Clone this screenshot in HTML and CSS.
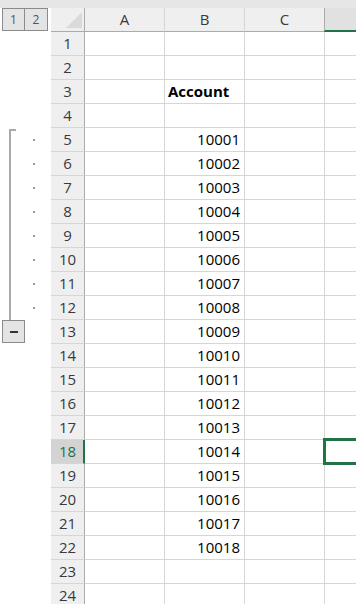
FILE: index.html
```html
<!DOCTYPE html>
<html lang="en">
<head>
  <meta charset="UTF-8">
  <title>Outline Sheet</title>
  <link rel="stylesheet" href="styles.css">
</head>
<body>

  <div class="topband"></div>

  <div class="sheet">
    <div class="row head">
      <div class="gutter">
        <div class="levels"><span class="lvl">1</span><span class="lvl">2</span></div>
      </div>
      <div class="rh corner"><div class="tri"></div></div>
      <div class="ch">A</div>
      <div class="ch">B</div>
      <div class="ch">C</div>
      <div class="ch active"></div>
    </div>

    <div class="row"><div class="gutter"></div><div class="rh">1</div><div class="c"></div><div class="c"></div><div class="c"></div><div class="c"></div></div>
    <div class="row"><div class="gutter"></div><div class="rh">2</div><div class="c"></div><div class="c"></div><div class="c"></div><div class="c"></div></div>
    <div class="row"><div class="gutter"></div><div class="rh">3</div><div class="c"></div><div class="c bold">Account</div><div class="c"></div><div class="c"></div></div>
    <div class="row"><div class="gutter"></div><div class="rh">4</div><div class="c"></div><div class="c"></div><div class="c"></div><div class="c"></div></div>

    <div class="row"><div class="gutter"><span class="bracket first"></span><span class="dot"></span></div><div class="rh">5</div><div class="c"></div><div class="c num">10001</div><div class="c"></div><div class="c"></div></div>
    <div class="row"><div class="gutter"><span class="bracket"></span><span class="dot"></span></div><div class="rh">6</div><div class="c"></div><div class="c num">10002</div><div class="c"></div><div class="c"></div></div>
    <div class="row"><div class="gutter"><span class="bracket"></span><span class="dot"></span></div><div class="rh">7</div><div class="c"></div><div class="c num">10003</div><div class="c"></div><div class="c"></div></div>
    <div class="row"><div class="gutter"><span class="bracket"></span><span class="dot"></span></div><div class="rh">8</div><div class="c"></div><div class="c num">10004</div><div class="c"></div><div class="c"></div></div>
    <div class="row"><div class="gutter"><span class="bracket"></span><span class="dot"></span></div><div class="rh">9</div><div class="c"></div><div class="c num">10005</div><div class="c"></div><div class="c"></div></div>
    <div class="row"><div class="gutter"><span class="bracket"></span><span class="dot"></span></div><div class="rh">10</div><div class="c"></div><div class="c num">10006</div><div class="c"></div><div class="c"></div></div>
    <div class="row"><div class="gutter"><span class="bracket"></span><span class="dot"></span></div><div class="rh">11</div><div class="c"></div><div class="c num">10007</div><div class="c"></div><div class="c"></div></div>
    <div class="row"><div class="gutter"><span class="bracket"></span><span class="dot"></span></div><div class="rh">12</div><div class="c"></div><div class="c num">10008</div><div class="c"></div><div class="c"></div></div>
    <div class="row"><div class="gutter"><span class="collapse"><span class="minus"></span></span></div><div class="rh">13</div><div class="c"></div><div class="c num">10009</div><div class="c"></div><div class="c"></div></div>

    <div class="row"><div class="gutter"></div><div class="rh">14</div><div class="c"></div><div class="c num">10010</div><div class="c"></div><div class="c"></div></div>
    <div class="row"><div class="gutter"></div><div class="rh">15</div><div class="c"></div><div class="c num">10011</div><div class="c"></div><div class="c"></div></div>
    <div class="row"><div class="gutter"></div><div class="rh">16</div><div class="c"></div><div class="c num">10012</div><div class="c"></div><div class="c"></div></div>
    <div class="row"><div class="gutter"></div><div class="rh">17</div><div class="c"></div><div class="c num">10013</div><div class="c"></div><div class="c"></div></div>
    <div class="row"><div class="gutter"></div><div class="rh active">18</div><div class="c"></div><div class="c num">10014</div><div class="c"></div><div class="c selected"></div></div>
    <div class="row"><div class="gutter"></div><div class="rh">19</div><div class="c"></div><div class="c num">10015</div><div class="c"></div><div class="c"></div></div>
    <div class="row"><div class="gutter"></div><div class="rh">20</div><div class="c"></div><div class="c num">10016</div><div class="c"></div><div class="c"></div></div>
    <div class="row"><div class="gutter"></div><div class="rh">21</div><div class="c"></div><div class="c num">10017</div><div class="c"></div><div class="c"></div></div>
    <div class="row"><div class="gutter"></div><div class="rh">22</div><div class="c"></div><div class="c num">10018</div><div class="c"></div><div class="c"></div></div>
    <div class="row"><div class="gutter"></div><div class="rh">23</div><div class="c"></div><div class="c"></div><div class="c"></div><div class="c"></div></div>
    <div class="row"><div class="gutter"></div><div class="rh">24</div><div class="c"></div><div class="c"></div><div class="c"></div><div class="c"></div></div>
  </div>

</body>
</html>
```

FILE: styles.css
```css
body {
  margin: 0;
  width: 356px;
  height: 604px;
  overflow: hidden;
  background-color: #fff;
  font-family: "Open Sans", "Liberation Sans", sans-serif;
}
.topband {
  height: 8px;
  background-color: #e6e6e6;
}
.sheet {
  width: 356px;
  overflow: hidden;
}
.row {
  display: grid;
  grid-template-columns: 51px 34px 80px 80px 80px 80px;
  height: 24px;
}
.row > div {
  box-sizing: border-box;
}
.gutter {
  display: flex;
  align-items: center;
}
.rh {
  background-color: #efefef;
  border-right: 1px solid #ababab;
  border-bottom: 1px solid #d6d6d6;
  color: #3a3a3a;
  font-size: 15px;
  text-align: center;
  line-height: 23px;
}
.rh.active {
  background-color: #d3d3d3;
  border-right: 2px solid #217346;
  color: #217346;
  padding-left: 1px;
}
.c {
  border-right: 1px solid #d6d6d6;
  border-bottom: 1px solid #d6d6d6;
  font-size: 15px;
  line-height: 23px;
  color: #000;
  white-space: nowrap;
}
.c.num {
  text-align: right;
  padding-right: 4px;
}
.c.bold {
  font-weight: bold;
  padding-left: 3px;
}
.c.selected {
  position: relative;
}
.c.selected::after {
  content: "";
  position: absolute;
  top: -2px;
  left: -2px;
  right: -4px;
  bottom: -2px;
  border: 3px solid #217346;
}

/* header row */
.head .ch,
.head .rh {
  border-bottom: 1px solid #ababab;
}
.ch {
  background-color: #efefef;
  border-right: 1px solid #d6d6d6;
  color: #3a3a3a;
  font-size: 15px;
  text-align: center;
  line-height: 23px;
}
.ch.active {
  background-color: #e1e1e1;
  border-bottom: 2px solid #217346 !important;
  border-left: 1px solid #ababab;
  margin-left: -1px;
}
.corner {
  display: flex;
  justify-content: flex-end;
  align-items: flex-end;
  padding: 0 2px 3px 0;
}
.tri {
  width: 16px;
  height: 16px;
  background-color: #dadada;
  clip-path: polygon(100% 0, 100% 100%, 0 100%);
}
.head .gutter {
  align-items: flex-start;
}
.levels {
  display: flex;
  margin-left: 2px;
}
.lvl {
  width: 23px;
  height: 23px;
  box-sizing: border-box;
  border: 1px solid #8b8b8b;
  background-color: #e4e4e4;
  color: #555;
  font-size: 12px;
  line-height: 21px;
  text-align: center;
}
.lvl + .lvl {
  border-left: none;
}

/* outline gutter */
.bracket {
  align-self: stretch;
  margin-left: 9px;
  width: 7px;
  box-sizing: border-box;
  border-left: 2px solid #a9a9a9;
}
.bracket.first {
  margin-top: 1px;
  border-top: 2px solid #a9a9a9;
}
.dot {
  width: 2px;
  height: 2px;
  margin-left: 17px;
  background-color: #9a9a9a;
}
.collapse {
  align-self: flex-start;
  margin-left: 2px;
  width: 23px;
  height: 23px;
  box-sizing: border-box;
  border: 1px solid #8b8b8b;
  background-color: #e4e4e4;
  display: flex;
  align-items: center;
  justify-content: center;
}
.minus {
  width: 8px;
  height: 2px;
  background-color: #333;
}
```
